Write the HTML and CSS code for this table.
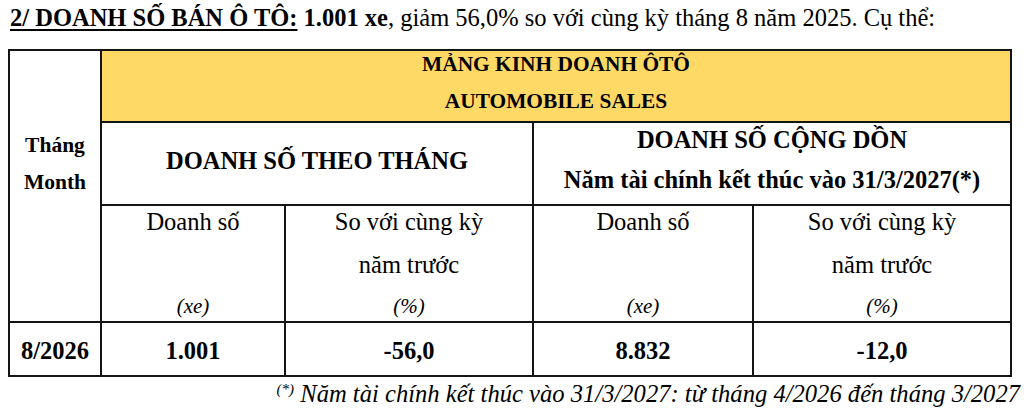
FILE: index.html
```html
<!DOCTYPE html>
<html lang="vi">
<head>
<meta charset="utf-8">
<link rel="stylesheet" href="styles.css">
</head>
<body class="page">
<p class="title"><span class="title-head">2/ DOANH SỐ BÁN Ô TÔ:</span> <b>1.001 xe</b>, giảm 56,0% so với cùng kỳ tháng 8 năm 2025. Cụ thể:</p>
<table class="sales">
  <colgroup>
    <col class="c1"><col class="c2"><col class="c3"><col class="c4"><col class="c5">
  </colgroup>
  <tr class="r1">
    <td rowspan="3" class="month-head"><div>Tháng</div><div>Month</div></td>
    <td colspan="4" class="yellow"><div class="y1">MẢNG KINH DOANH ÔTÔ</div><div>AUTOMOBILE SALES</div></td>
  </tr>
  <tr class="r2">
    <td colspan="2" class="group one">DOANH SỐ THEO THÁNG</td>
    <td colspan="2" class="group two"><div>DOANH SỐ CỘNG DỒN</div><div class="g2">Năm tài chính kết thúc vào 31/3/2027(*)</div></td>
  </tr>
  <tr class="r3">
    <td class="sh"><div class="ln">Doanh số</div><div class="ln">&nbsp;</div><div class="ln unit">(xe)</div></td>
    <td class="sh"><div class="ln">So với cùng kỳ</div><div class="ln">năm trước</div><div class="ln unit">(%)</div></td>
    <td class="sh"><div class="ln">Doanh số</div><div class="ln">&nbsp;</div><div class="ln unit">(xe)</div></td>
    <td class="sh"><div class="ln">So với cùng kỳ</div><div class="ln">năm trước</div><div class="ln unit">(%)</div></td>
  </tr>
  <tr class="r4">
    <td>8/2026</td>
    <td>1.001</td>
    <td>-56,0</td>
    <td>8.832</td>
    <td>-12,0</td>
  </tr>
</table>
<p class="note"><sup>(*)</sup> Năm tài chính kết thúc vào 31/3/2027: từ tháng 4/2026 đến tháng 3/2027</p>
</body>
</html>
```
FILE: styles.css
```css
html, body {
  margin: 0;
  padding: 0;
  background: #fff;
}
.page {
  font-family: "Liberation Serif", serif;
  color: #000;
  width: 1024px;
  height: 415px;
  overflow: hidden;
}
.title {
  font-family: "Liberation Serif", serif;
  margin: 0;
  padding: 4px 0 0 10px;
  font-size: 24.5px;
  line-height: 28px;
  height: 43px;
  box-sizing: border-box;
  white-space: nowrap;
}
.title-head {
  font-weight: bold;
  text-decoration: underline;
  text-decoration-thickness: 2px;
  text-underline-offset: 3px;
}
.sales {
  font-family: "Liberation Serif", serif;
  margin-left: 8px;
  margin-top: 6px;
  border-collapse: collapse;
  table-layout: fixed;
  width: 1002px;
}
.c1 { width: 92px; }
.c2 { width: 184px; }
.c3 { width: 248px; }
.c4 { width: 220px; }
.c5 { width: 258px; }
.sales td {
  font-family: "Liberation Serif", serif;
  border: 2px solid #141414;
  padding: 0;
  text-align: center;
  vertical-align: top;
  white-space: nowrap;
}
.r1 { height: 72px; }
.r2 { height: 83px; }
.r3 { height: 117px; }
.r4 { height: 54px; }
.month-head {
  font-weight: bold;
  font-size: 21.5px;
  line-height: 37px;
  padding-top: 76px !important;
}
.yellow {
  background: #ffd966;
  font-weight: bold;
  font-size: 21.4px;
  line-height: 37px;
}
.yellow .y1 {
  margin-top: -5px;
}
.group {
  font-weight: bold;
  font-size: 24.5px;
  line-height: 34px;
}
.group.one {
  padding-top: 21px !important;
}
.group.two {
  padding-top: 0;
}
.group .g2 {
  margin-top: 6px;
}
.sh {
  font-size: 24.5px;
}
.ln {
  line-height: 32px;
  margin-bottom: 11px;
}
.ln.unit {
  font-style: italic;
  font-size: 21px;
  line-height: 28px;
  margin-top: 2px;
  margin-bottom: 0;
}
.r4 td {
  font-weight: bold;
  font-size: 24.5px;
  line-height: 34px;
  vertical-align: middle;
  padding-top: 3px;
}
.note {
  font-family: "Liberation Serif", serif;
  margin: 0;
  padding: 3px 4px 0 0;
  text-align: right;
  font-style: italic;
  font-size: 24.6px;
  line-height: 28px;
  white-space: nowrap;
}
.note sup {
  font-size: 15px;
  vertical-align: 8px;
  line-height: 0;
}
```
